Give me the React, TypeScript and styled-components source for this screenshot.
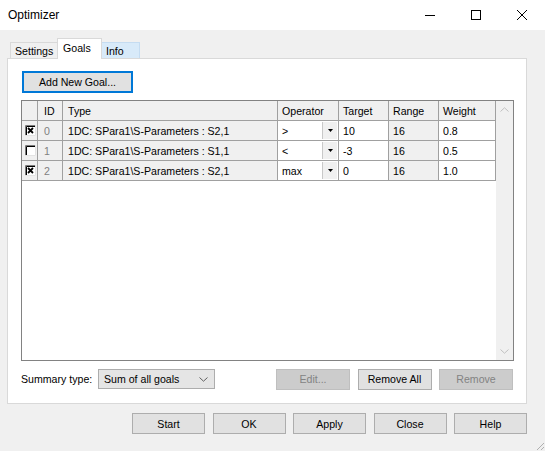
import React from "react";
import styled, { createGlobalStyle } from "styled-components";

const Global = createGlobalStyle`
  html, body { margin: 0; padding: 0; }
  body {
    font-family: "Liberation Sans", Arial, sans-serif;
    font-size: 10.6px;
    color: #000;
    background: #f0f0f0;
  }
  * { box-sizing: border-box; }
`;

const Window = styled.div`
  width: 545px;
  height: 451px;
  display: flex;
  flex-direction: column;
  background: #f0f0f0;
  overflow: hidden;
`;

const TitleBar = styled.div`
  height: 30px;
  flex-shrink: 0;
  background: #fff;
  display: flex;
  align-items: center;
`;

const Title = styled.div`
  flex: 1;
  padding-left: 8px;
  font-size: 12px;
  color: #000;
`;

const CaptionButton = styled.div`
  width: 46px;
  height: 30px;
  display: flex;
  align-items: center;
  justify-content: center;
`;

const Body = styled.div`
  flex: 1;
  display: flex;
  flex-direction: column;
  padding: 8px 18px 0 7px;
`;

const TabStrip = styled.div`
  height: 20px;
  display: flex;
  align-items: flex-end;
  padding-left: 3px;
`;

const Tab = styled.div<{ $w: number; $state?: "active" | "hover" }>`
  width: ${(p) => p.$w}px;
  height: ${(p) => (p.$state === "active" ? 21 : 16)}px;
  margin-bottom: ${(p) => (p.$state === "active" ? -1 : 0)}px;
  margin-right: -1px;
  padding-left: ${(p) => (p.$state === "active" ? 5 : 4)}px;
  display: flex;
  align-items: center;
  padding-bottom: ${(p) => (p.$state === "active" ? 3 : 0)}px;
  background: ${(p) =>
    p.$state === "active" ? "#fff" : p.$state === "hover" ? "#d8eaf9" : "#f0f0f0"};
  border: 1px solid ${(p) => (p.$state === "hover" ? "#c5dcf1" : "#d9d9d9")};
  border-bottom: none;
  position: relative;
  z-index: ${(p) => (p.$state === "active" ? 2 : 1)};
`;

const Panel = styled.div`
  height: 346px;
  background: #fff;
  border: 1px solid #d9d9d9;
  padding: 12px 12px 13px 13px;
  display: flex;
  flex-direction: column;
  gap: 7px;
`;

const Button = styled.div<{ $w: number; $disabled?: boolean; $focused?: boolean; $h?: number }>`
  width: ${(p) => p.$w}px;
  height: ${(p) => p.$h ?? 21}px;
  display: flex;
  align-items: center;
  justify-content: center;
  background: ${(p) => (p.$disabled ? "#cccccc" : "#e1e1e1")};
  border: ${(p) => (p.$focused ? "2px solid #0078d7" : p.$disabled ? "1px solid #bfbfbf" : "1px solid #adadad")};
  color: ${(p) => (p.$disabled ? "#838383" : "#000")};
  flex-shrink: 0;
  white-space: nowrap;
`;

const AddRow = styled.div`
  display: flex;
  padding-left: 1px;
`;

const GridFrame = styled.div`
  width: 493px;
  height: 261px;
  border: 1px solid #828282;
  display: flex;
  background: #fff;
`;

const Table = styled.div`
  flex: 1;
  display: flex;
  flex-direction: column;
`;

const Row = styled.div`
  display: grid;
  grid-template-columns: 16px 25px 215px 61px 50px 50px 57px;
  height: 20px;
`;

type CellKind = "head" | "ro" | "edit";

const Cell = styled.div<{ $kind: CellKind; $pad?: number; $muted?: boolean }>`
  display: flex;
  align-items: center;
  padding-left: ${(p) => p.$pad ?? 4}px;
  background: ${(p) => (p.$kind === "edit" ? "#fff" : "#f0f0f0")};
  border-right: 1px solid #a0a0a0;
  border-bottom: 1px solid #a0a0a0;
  color: ${(p) => (p.$muted ? "#808080" : "#000")};
  white-space: nowrap;
  overflow: hidden;
`;

const CheckCell = styled.div`
  display: flex;
  align-items: center;
  justify-content: flex-end;
  padding-right: 1px;
  background: #f0f0f0;
  border-right: 1px solid #a0a0a0;
  border-bottom: 1px solid #a0a0a0;
`;

const ComboCell = styled.div`
  display: flex;
  align-items: stretch;
  background: #fff;
  border-right: 1px solid #a0a0a0;
  border-bottom: 1px solid #a0a0a0;
`;

const ComboText = styled.div`
  flex: 1;
  display: flex;
  align-items: center;
  padding-left: 4px;
`;

const ComboButton = styled.div`
  width: 15px;
  margin: 1px 1px 1px 0;
  background: #f0f0f0;
  border-left: 1px solid #c8c8c8;
  display: flex;
  align-items: center;
  justify-content: center;
`;

const ScrollBar = styled.div`
  width: 17px;
  background: #f0f0f0;
  display: flex;
  flex-direction: column;
  justify-content: space-between;
`;

const ScrollArrow = styled.div`
  height: 17px;
  display: flex;
  align-items: center;
  justify-content: center;
`;

const SummaryRow = styled.div`
  height: 22px;
  display: flex;
  align-items: center;
  gap: 7.5px;
  padding-right: 1px;
`;

const Label = styled.div`
  width: 69.5px;
  flex-shrink: 0;
  white-space: nowrap;
`;

const Select = styled.div`
  width: 117px;
  height: 20px;
  background: #e5e5e5;
  border: 1px solid #adadad;
  display: flex;
  align-items: center;
  justify-content: space-between;
  padding: 0 6px 0 5px;
  margin-right: auto;
`;

const FooterRow = styled.div`
  display: flex;
  justify-content: flex-end;
  gap: 7.5px;
  margin-top: 9px;
`;

const Grip = styled.div`
  position: absolute;
  right: 0;
  bottom: 0;
  width: 12px;
  height: 12px;
`;

const Root = styled.div`
  position: relative;
  width: 545px;
  height: 451px;
`;

const Check = ({ on }: { on: boolean }) => (
  <svg width="11" height="11" viewBox="0 0 11 11">
    <rect x="0" y="0" width="11" height="11" fill="#fff" />
    <path d="M0.5 11V0.5H11" stroke="#7a7a7a" strokeWidth="1" fill="none" />
    <path d="M1.5 10V1.5H10" stroke="#000" strokeWidth="1" fill="none" />
    <path d="M0 10.5H10.5V0" stroke="#e3e3e3" strokeWidth="1" fill="none" />
    {on && <path d="M3 3L8 8M8 3L3 8" stroke="#000" strokeWidth="1.8" />}
  </svg>
);

const DownTri = () => (
  <svg width="5" height="3" viewBox="0 0 5 3">
    <path d="M0 0H5L2.5 3Z" fill="#000" />
  </svg>
);

const Chevron = ({ up, color }: { up?: boolean; color: string }) => (
  <svg width="9" height="5" viewBox="0 0 9 5">
    <path d={up ? "M0.5 4.5L4.5 0.8L8.5 4.5" : "M0.5 0.5L4.5 4.2L8.5 0.5"} stroke={color} strokeWidth="1" fill="none" />
  </svg>
);

const goals = [
  { on: true, id: "0", type: "1DC: SPara1\\S-Parameters : S2,1", op: ">", target: "10", range: "16", weight: "0.8" },
  { on: false, id: "1", type: "1DC: SPara1\\S-Parameters : S1,1", op: "<", target: "-3", range: "16", weight: "0.5" },
  { on: true, id: "2", type: "1DC: SPara1\\S-Parameters : S2,1", op: "max", target: "0", range: "16", weight: "1.0" },
];

export default function App() {
  return (
    <Root>
      <Global />
      <Window>
        <TitleBar>
          <Title>Optimizer</Title>
          <CaptionButton>
            <svg width="10" height="10" viewBox="0 0 10 10">
              <path d="M0 5.5H10" stroke="#000" strokeWidth="1" />
            </svg>
          </CaptionButton>
          <CaptionButton>
            <svg width="10" height="10" viewBox="0 0 10 10">
              <rect x="0.5" y="0.5" width="9" height="9" stroke="#000" strokeWidth="1" fill="none" />
            </svg>
          </CaptionButton>
          <CaptionButton>
            <svg width="10" height="10" viewBox="0 0 10 10">
              <path d="M0 0L10 10M10 0L0 10" stroke="#000" strokeWidth="1" />
            </svg>
          </CaptionButton>
        </TitleBar>
        <Body>
          <TabStrip>
            <Tab $w={48}>Settings</Tab>
            <Tab $w={45} $state="active">Goals</Tab>
            <Tab $w={39} $state="hover">Info</Tab>
          </TabStrip>
          <Panel>
            <AddRow>
              <Button $w={111} $h={22} $focused>Add New Goal...</Button>
            </AddRow>
            <GridFrame>
              <Table>
                <Row>
                  <CheckCell />
                  <Cell $kind="head" $pad={6}>ID</Cell>
                  <Cell $kind="head" $pad={5}>Type</Cell>
                  <Cell $kind="head">Operator</Cell>
                  <Cell $kind="head">Target</Cell>
                  <Cell $kind="head">Range</Cell>
                  <Cell $kind="head">Weight</Cell>
                </Row>
                {goals.map((g) => (
                  <Row key={g.id}>
                    <CheckCell>
                      <Check on={g.on} />
                    </CheckCell>
                    <Cell $kind="ro" $pad={6} $muted>{g.id}</Cell>
                    <Cell $kind="ro" $pad={5}>{g.type}</Cell>
                    <ComboCell>
                      <ComboText>{g.op}</ComboText>
                      <ComboButton>
                        <DownTri />
                      </ComboButton>
                    </ComboCell>
                    <Cell $kind="edit">{g.target}</Cell>
                    <Cell $kind="ro">{g.range}</Cell>
                    <Cell $kind="edit">{g.weight}</Cell>
                  </Row>
                ))}
              </Table>
              <ScrollBar>
                <ScrollArrow>
                  <Chevron up color="#c0c0c0" />
                </ScrollArrow>
                <ScrollArrow>
                  <Chevron color="#c0c0c0" />
                </ScrollArrow>
              </ScrollBar>
            </GridFrame>
            <SummaryRow>
              <Label>Summary type:</Label>
              <Select>
                <span>Sum of all goals</span>
                <Chevron color="#606060" />
              </Select>
              <Button $w={74} $disabled>Edit...</Button>
              <Button $w={74}>Remove All</Button>
              <Button $w={74} $disabled>Remove</Button>
            </SummaryRow>
          </Panel>
          <FooterRow>
            <Button $w={73}>Start</Button>
            <Button $w={73}>OK</Button>
            <Button $w={73}>Apply</Button>
            <Button $w={73}>Close</Button>
            <Button $w={73}>Help</Button>
          </FooterRow>
        </Body>
      </Window>
      <Grip>
        <svg width="12" height="12" viewBox="0 0 12 12">
          <path d="M11 4L4 11M11 8L8 11" stroke="#b0b0b0" strokeWidth="1" />
        </svg>
      </Grip>
    </Root>
  );
}
